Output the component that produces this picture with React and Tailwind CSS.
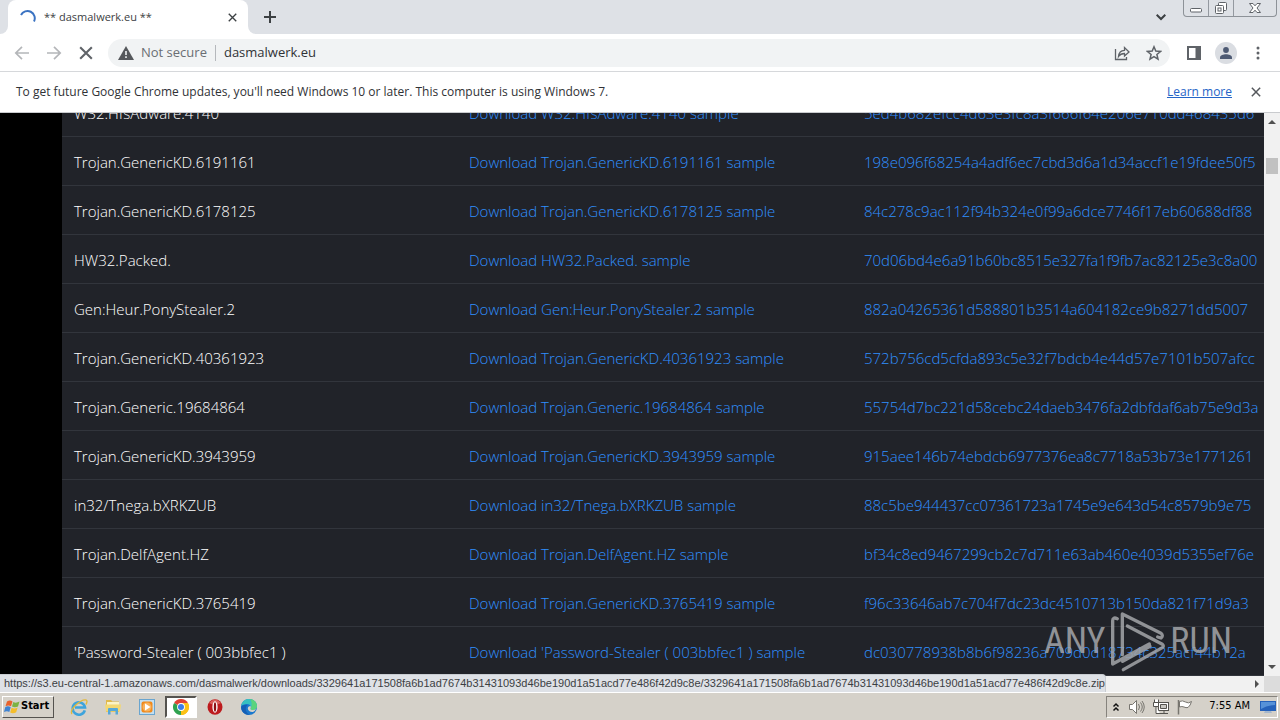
const samples = [
  ["W32.HfsAdware.4140", "5ed4b682efcc4d63e3fc8a3f666f64e206e710dd468435d6"],
  ["Trojan.GenericKD.6191161", "198e096f68254a4adf6ec7cbd3d6a1d34accf1e19fdee50f5"],
  ["Trojan.GenericKD.6178125", "84c278c9ac112f94b324e0f99a6dce7746f17eb60688df88"],
  ["HW32.Packed.", "70d06bd4e6a91b60bc8515e327fa1f9fb7ac82125e3c8a00"],
  ["Gen:Heur.PonyStealer.2", "882a04265361d588801b3514a604182ce9b8271dd5007"],
  ["Trojan.GenericKD.40361923", "572b756cd5cfda893c5e32f7bdcb4e44d57e7101b507afcc"],
  ["Trojan.Generic.19684864", "55754d7bc221d58cebc24daeb3476fa2dbfdaf6ab75e9d3a"],
  ["Trojan.GenericKD.3943959", "915aee146b74ebdcb6977376ea8c7718a53b73e1771261"],
  ["in32/Tnega.bXRKZUB", "88c5be944437cc07361723a1745e9e643d54c8579b9e75"],
  ["Trojan.DelfAgent.HZ", "bf34c8ed9467299cb2c7d711e63ab460e4039d5355ef76e"],
  ["Trojan.GenericKD.3765419", "f96c33646ab7c704f7dc23dc4510713b150da821f71d9a3"],
  ["'Password-Stealer ( 003bbfec1 )", "dc030778938b8b6f98236a709d0d18734c325acf44b12a"],
];

const hoveredUrl =
  "https://s3.eu-central-1.amazonaws.com/dasmalwerk/downloads/3329641a171508fa6b1ad7674b31431093d46be190d1a51acd77e486f42d9c8e/3329641a171508fa6b1ad7674b31431093d46be190d1a51acd77e486f42d9c8e.zip";

function Cross({ className }) {
  return (
    <svg className={className} viewBox="0 0 12 12" fill="none" stroke="currentColor" strokeWidth="1.8">
      <path d="M1 1l10 10M11 1L1 11" />
    </svg>
  );
}

function TabStrip() {
  return (
    <div className="flex h-[34px] items-stretch bg-[#dee1e6]">
      <div className="flex w-2 items-end bg-white">
        <div className="h-full w-full rounded-br-lg bg-[#dee1e6]" />
      </div>
      <div className="flex w-60 items-center rounded-t-lg bg-white pr-2 pl-3">
        <svg className="size-4" viewBox="0 0 16 16" fill="none" stroke="#3b73c2" strokeWidth="2">
          <path d="M1 6A7 7 0 1 1 14 12.500" />
        </svg>
        <span className="ml-2 flex-1 text-[11px] text-[#3c4043]">** dasmalwerk.eu **</span>
        <button type="button" aria-label="Close tab" className="flex size-4 items-center justify-center text-[#3c4043]">
          <Cross className="size-[9px]" />
        </button>
      </div>
      <div className="flex w-2 items-end bg-white">
        <div className="h-full w-full rounded-bl-lg bg-[#dee1e6]" />
      </div>
      <button type="button" aria-label="New tab" className="ml-1 flex w-5 items-center justify-center text-[#3c4043]">
        <svg className="size-3" viewBox="0 0 12 12" stroke="currentColor" strokeWidth="2">
          <path d="M6 0v12M0 6h12" />
        </svg>
      </button>
      <div className="flex-1" />
      <button type="button" aria-label="Search tabs" className="mr-3 flex w-5 items-center justify-center text-[#3c4043]">
        <svg className="size-2.5" viewBox="0 0 10 10" fill="none" stroke="currentColor" strokeWidth="2">
          <path d="M.7 2.700L5 7l4.300-4.300" />
        </svg>
      </button>
      <div className="mr-[3px] flex h-[17px] divide-x divide-[#9499a0] rounded-b border border-t-0 border-[#8d9298] text-[#5f6368]">
        <button type="button" aria-label="Minimize" className="flex w-[25px] items-center justify-center">
          <svg className="h-4 w-3" viewBox="0 0 12 16" fill="#fff" stroke="currentColor">
            <rect x=".5" y="8.500" width="11" height="3.500" rx="1" />
          </svg>
        </button>
        <button type="button" aria-label="Restore" className="flex w-[25px] items-center justify-center">
          <svg className="h-4 w-3.5" viewBox="0 0 14 16" fill="#fff" stroke="currentColor">
            <rect x="4.500" y="2.500" width="8" height="8" rx="1" />
            <rect x="1.500" y="5.500" width="8" height="8" rx="1" />
            <rect x="4" y="8" width="3" height="3" />
          </svg>
        </button>
        <button type="button" aria-label="Close" className="flex w-[42px] items-center justify-center">
          <svg className="h-4 w-3" viewBox="0 0 12 16" fill="#fff" stroke="currentColor">
            <path d="M.5 3.500h3.500l2 2.300 2-2.300h3.500L8 8l3.500 4.500H8l-2-2.300-2 2.300H.5L4 8z" />
          </svg>
        </button>
      </div>
    </div>
  );
}

function Toolbar() {
  return (
    <div className="flex h-[38px] items-center border-b border-[#d6d8db] bg-white pr-2.5 text-[#5f6368]">
      <button type="button" aria-label="Back" className="flex w-8 items-center justify-center pl-3 text-[#b4b6b9]">
        <svg className="h-3.5 w-4 shrink-0" viewBox="0 0 16 14" fill="none" stroke="currentColor" strokeWidth="1.700">
          <path d="M15 7H2M8 .8L1.800 7 8 13.200" />
        </svg>
      </button>
      <button type="button" aria-label="Forward" className="flex w-8 items-center justify-center pl-3 text-[#b4b6b9]">
        <svg className="h-3.5 w-4 shrink-0" viewBox="0 0 16 14" fill="none" stroke="currentColor" strokeWidth="1.700">
          <path d="M1 7h13M8 .8L14.200 7 8 13.200" />
        </svg>
      </button>
      <button type="button" aria-label="Stop loading" className="flex w-8 items-center justify-center pl-3">
        <Cross className="size-3.5 shrink-0" />
      </button>
      <div className="ml-3 flex h-7 flex-1 items-center rounded-full bg-[#f1f3f4] pl-2.5">
        <svg className="h-3.5 w-4" viewBox="0 0 16 14">
          <path d="M8 0l8 14H0z" fill="#55585c" />
          <path d="M7.200 5h1.600v4H7.200zM7.200 10.300h1.600v1.700H7.200z" fill="#f1f3f4" />
        </svg>
        <label htmlFor="address" className="ml-[7px] text-[13px] text-[#6a6e73]">
          Not secure
        </label>
        <div className="mx-2 h-4 w-px bg-[#b5b8bc]" />
        <input id="address" defaultValue="dasmalwerk.eu" className="min-w-0 flex-1 bg-transparent text-[13px] text-[#303236] outline-none" />
        <button type="button" aria-label="Share this page" className="flex w-8 items-center justify-center">
          <svg className="size-4" viewBox="0 0 16 16" fill="none" stroke="currentColor" strokeWidth="1.300">
            <path d="M1.500 4v10.500h11V12M4.500 11.500c.3-3.800 2.500-6 6-6.200V2.500L15 7l-4.500 4V8.500c-2.500 0-4.500.8-6 3z" />
          </svg>
        </button>
        <button type="button" aria-label="Bookmark this page" className="flex w-8 items-center justify-center">
          <svg className="size-4" viewBox="0 0 16 16" fill="none" stroke="currentColor" strokeWidth="1.500">
            <path d="M8 1.800l1.800 4.300 4.700.4-3.600 3 1.100 4.600L8 11.600l-4 2.500 1.100-4.600-3.600-3 4.700-.4z" />
          </svg>
        </button>
      </div>
      <button type="button" aria-label="Side panel" className="ml-2 flex w-8 items-center justify-center">
        <svg className="size-3.5" viewBox="0 0 14 14">
          <path d="M0 0h14v14H0zM2 2v10h6.500V2z" fill="currentColor" fillRule="evenodd" />
        </svg>
      </button>
      <button type="button" aria-label="Profile" className="mx-[5px] flex size-[22px] items-center justify-center rounded-full bg-[#dadde2] text-[#4d5a73]">
        <svg className="size-3" viewBox="0 0 12 12" fill="currentColor">
          <circle cx="6" cy="3" r="2.900" />
          <path d="M0 12v-1.500C0 8.300 3.500 7.300 6 7.300s6 1 6 3.200V12z" />
        </svg>
      </button>
      <button type="button" aria-label="Menu" className="ml-1 flex w-6 items-center justify-center">
        <svg className="h-3.5 w-1" viewBox="0 0 4 14" fill="currentColor">
          <circle cx="2" cy="2" r="1.500" />
          <circle cx="2" cy="7" r="1.500" />
          <circle cx="2" cy="12" r="1.500" />
        </svg>
      </button>
    </div>
  );
}

function InfoBar() {
  return (
    <div className="flex h-[41px] items-center border-b border-[#c9cbce] bg-white px-4 text-xs text-[#303236]">
      <p className="flex-1">
        To get future Google Chrome updates, you'll need Windows 10 or later. This computer is using Windows 7.
      </p>
      <a href="#learn" className="text-[#2565c7] underline">
        Learn more
      </a>
      <button type="button" aria-label="Dismiss" className="ml-4 flex size-4 items-center justify-center text-[#55585c]">
        <Cross className="size-2.5" />
      </button>
    </div>
  );
}

function Watermark() {
  return (
    <div className="absolute right-8 bottom-0 flex h-[70px] items-center gap-1 font-['Roboto_Condensed','Open_Sans_Condensed','DejaVu_Sans_Mono',monospace] text-[36px] leading-none text-[#a4a6a9] opacity-85">
      <span>ANY</span>
      <svg className="h-[62px] w-[57px]" viewBox="27 28 171 186" fill="none" stroke="currentColor" strokeWidth="10" strokeLinecap="round" strokeLinejoin="round">
        <path d="M52 54Q38 48 38 60V190L148 130" />
        <path d="M67 162V40L183 98q8 7 0 14l-10-3" />
        <path d="M82 76L187 131q6 5 0 10L70 207" />
        <path d="M68 182L150 137" />
      </svg>
      <span>RUN</span>
    </div>
  );
}

function Page() {
  return (
    <div className="relative flex min-h-0 flex-1 flex-col">
      <div className="flex min-h-0 flex-1">
        <main className="relative flex min-w-0 flex-1 flex-col justify-end overflow-hidden bg-black pl-[62px]">
          <table className="w-full table-fixed border-collapse bg-[#212329] text-[15px] font-light text-white">
            <colgroup>
              <col className="w-[395px]" />
              <col className="w-[395px]" />
              <col />
            </colgroup>
            <tbody>
              {samples.map(([name, hash]) => (
                <tr key={name} className="h-[49px] border-b border-[#32353c]">
                  <td className="px-3 pt-0.5 whitespace-nowrap">{name}</td>
                  <td className="px-3 pt-0.5 whitespace-nowrap">
                    <a href="#download" className="text-[#3090ff]">Download {name} sample</a>
                  </td>
                  <td className="overflow-hidden pt-0.5 pl-3 whitespace-nowrap">
                    <a href="#hash" className="text-[#3090ff]">{hash}</a>
                  </td>
                </tr>
              ))}
            </tbody>
          </table>
          <Watermark />
        </main>
        <div className="flex w-4 flex-col items-center justify-between bg-[#f1f1f1] py-1.5">
          <div className="flex flex-col items-center gap-[33px]">
            <svg className="h-1.5 w-2" viewBox="0 0 8 6" fill="#505050"><path d="M0 5l4-4 4 4z" /></svg>
            <div className="h-4 w-3 bg-[#c1c1c1]" />
          </div>
          <svg className="h-1.5 w-2" viewBox="0 0 8 6" fill="#505050"><path d="M0 1l4 4 4-4z" /></svg>
        </div>
      </div>
      <div className="flex h-4 items-center bg-[#f1f1f1]">
        <div className="flex-1" />
        <svg className="mr-1 h-2 w-1.5" viewBox="0 0 6 8" fill="#505050"><path d="M1 0l4 4-4 4z" /></svg>
        <div className="h-full w-4 bg-[#dcdcdc]" />
      </div>
      <div className="absolute bottom-0 left-0 flex h-[18px] items-center rounded-tr border-t border-r border-[#c8ccd1] bg-[#dee1e6] pl-1 font-['Liberation_Sans',sans-serif] text-[11px] whitespace-nowrap text-[#3c4043]">
        {hoveredUrl}
      </div>
    </div>
  );
}

function Taskbar() {
  return (
    <footer className="flex h-7 items-center border-t border-white bg-[#d5d1c9] pr-0.5 pl-0.5 font-['DejaVu_Sans_Condensed',sans-serif] text-[11px] text-black">
      <button type="button" className="flex h-[22px] w-[52px] items-center gap-px border border-t-white border-r-[#55534f] border-b-[#55534f] border-l-white pl-px font-bold">
        <svg className="size-4 shrink-0" viewBox="0 0 16 16">
          <path d="M3 2.500Q6 .5 8.500 2.500L7 7.300Q4.500 5.500 1.500 7.300z" fill="#e8622c" />
          <path d="M9.300 3Q12 4.500 15.500 2.500L14 7.500Q11 9 8 7.600z" fill="#7cb342" />
          <path d="M1.200 8.200Q4 6.500 6.700 8.300L5.300 13Q3 11.500 0 13z" fill="#3f83d1" />
          <path d="M7.600 8.700Q10.500 10.200 13.600 8.500L12.200 13.300Q9 15 6.200 13.400z" fill="#f4bd2b" />
        </svg>
        Start
      </button>
      <nav className="ml-[9px] flex items-center gap-0.5">
        <button type="button" aria-label="Internet Explorer" className="flex h-[22px] w-8 items-center justify-center">
          <svg className="size-[18px]" viewBox="0 0 18 18" fill="none">
            <path d="M14.800 12.300A6.200 6.200 0 1 1 15 9.500H5" stroke="#3ea4dc" strokeWidth="2.600" />
            <path d="M2 16C-1 12 10 1.500 15.500 1.800c2.500.2 1.200 3.700.3 4.700" stroke="#e3b83a" strokeWidth="1.300" />
          </svg>
        </button>
        <button type="button" aria-label="Explorer" className="flex h-[22px] w-8 items-center justify-center">
          <svg className="size-4" viewBox="0 0 16 16">
            <path d="M1 1h5l1.500 1.500H14V13H1z" fill="#e0b94c" />
            <path d="M2 3h12v3H2z" fill="#fbf3c6" />
            <path d="M0 5.500h16l-1 7H1z" fill="#f3d873" />
            <path d="M3 15.500V10q0-1 1-1h8q1 0 1 1v5.500h-2.500v-3.500h-5v3.500z" fill="#56a8d8" />
          </svg>
        </button>
        <button type="button" aria-label="Media Player" className="flex h-[22px] w-8 items-center justify-center">
          <svg className="size-4" viewBox="0 0 16 16">
            <rect x=".5" y=".5" width="15" height="15" fill="#c3dff1" stroke="#6aa5cf" />
            <rect x="2.500" y="2.500" width="11" height="11" rx="2" fill="#f18a1c" />
            <circle cx="8" cy="8" r="4.500" fill="#f8b25d" />
            <path d="M6 4.500l5.500 3.500L6 11.500z" fill="#fff" />
          </svg>
        </button>
        <button type="button" aria-label="Chrome" className="flex h-[22px] w-8 items-center justify-center border-2 border-t-[#55534f] border-r-white border-b-white border-l-[#55534f] bg-white">
          <svg className="size-4 shrink-0" viewBox="0 0 16 16">
            <path d="M8 8L1.070 4A8 8 0 0 1 14.930 4z" fill="#df4234" />
            <path d="M8 8L14.930 4A8 8 0 0 1 8 16z" fill="#fbc116" />
            <path d="M8 8L8 16A8 8 0 0 1 1.070 4z" fill="#2fa250" />
            <path d="M8 4h6.930A8 8 0 0 1 8 16l3.460-6z" fill="#fbc116" />
            <circle cx="8" cy="8" r="3.900" fill="#fff" />
            <circle cx="8" cy="8" r="3" fill="#3b7de8" />
          </svg>
        </button>
        <button type="button" aria-label="Opera" className="flex h-[22px] w-8 items-center justify-center">
          <svg className="size-4" viewBox="0 0 16 16">
            <ellipse cx="8" cy="8" rx="7.500" ry="7.800" fill="#bd1b1e" />
            <path d="M2 4Q8-3 14 4 8 7 2 4" fill="#d9605c" />
            <ellipse cx="8" cy="8" rx="2.600" ry="5.800" fill="#fff" />
            <ellipse cx="8" cy="8" rx="1.200" ry="4.800" fill="#8c1013" />
          </svg>
        </button>
        <button type="button" aria-label="Edge" className="flex h-[22px] w-8 items-center justify-center">
          <svg className="size-4" viewBox="0 0 16 16">
            <circle cx="8" cy="8" r="8" fill="#1a78ce" />
            <path d="M.2 7C1 2.500 4 0 8 0c5 0 8 3.500 8 7 0 2.500-2 4-4 4-1.800 0-3-.7-2.500-1.700C10.500 7.500 9 5 6 5 3 5 1 6 .2 7z" fill="#37c0c0" />
            <path d="M9 .1c4.500.4 7 3.600 7 6.900 0 2.500-2 4-4 4-1.800 0-3-.7-2.500-1.700 1.300-2 2-6-.5-9.200z" fill="#5bd37c" />
            <path d="M9.500 9.300C9 10.500 10.200 11 12 11c1.300 0 2.400-.4 3.200-1.200-.7 1.700-2 2.700-3.200 3.200-3 .5-6-2-5-4.500.5-1 2-1.500 3-.8z" fill="#d5d1c9" />
            <path d="M6.500 6C4 8 4 13 8.500 15.900 3.500 16 0 12.500.1 8 1.500 6 4 5.500 6.500 6z" fill="#155fb5" />
          </svg>
        </button>
      </nav>
      <div className="flex-1" />
      <div className="flex h-[22px] items-center border border-t-[#86837d] border-r-white border-b-white border-l-[#86837d] pl-1">
        <button type="button" aria-label="Show hidden icons" className="flex w-2.5 justify-center">
          <svg className="h-2.5 w-2" viewBox="0 0 8 10" fill="none" stroke="#111" strokeWidth="1.500">
            <path d="M1.500 4.500L4 2l2.500 2.500M1.500 8.500L4 6l2.500 2.500" />
          </svg>
        </button>
        <svg className="ml-2 size-4" viewBox="0 0 16 16" fill="#fff" stroke="#77756f">
          <path d="M.5 5.500h3l4-4v13l-4-4h-3z" />
          <path d="M9.500 5q2 3 0 6M11.500 3.500q3.500 4.500 0 9M13 2q4.500 6 0 12" fill="none" />
        </svg>
        <svg className="ml-2 size-4" viewBox="0 0 16 16" fill="#fff" stroke="#55534f">
          <rect x="5.500" y="3.500" width="10" height="8" />
          <path d="M7.500 5.500h6v4h-6z" fill="#c9c7c2" />
          <path d="M7 14.500h8M11 11.500v3M1.500.5v3h4v-3M.5 3.500h5v4h-5zM3 7.500v7h4" />
        </svg>
        <svg className="ml-2 size-4" viewBox="0 0 16 16" fill="#fff" stroke="#77756f">
          <path d="M1.500 1v14.500" strokeWidth="1.500" />
          <path d="M2.500 2.500q3-1.500 6 .5t6-.5q-1 4-3.500 6-2 .5-4-.5t-4.500 0z" />
        </svg>
        <time className="ml-4 text-[11px]">7:55 AM</time>
        <svg className="mr-px ml-2.5 size-4" viewBox="0 0 16 16">
          <path d="M0 2h16v10H0z" fill="#2662ba" />
          <path d="M1 3h14v3Q7 6 1 10z" fill="#5792d8" />
          <path d="M5 12h6l1 2H4z" fill="#a5b7cc" />
        </svg>
      </div>
    </footer>
  );
}

export default function App() {
  return (
    <div className="flex h-screen flex-col overflow-hidden bg-white font-['Open_Sans',sans-serif]">
      <TabStrip />
      <Toolbar />
      <InfoBar />
      <Page />
      <Taskbar />
    </div>
  );
}
